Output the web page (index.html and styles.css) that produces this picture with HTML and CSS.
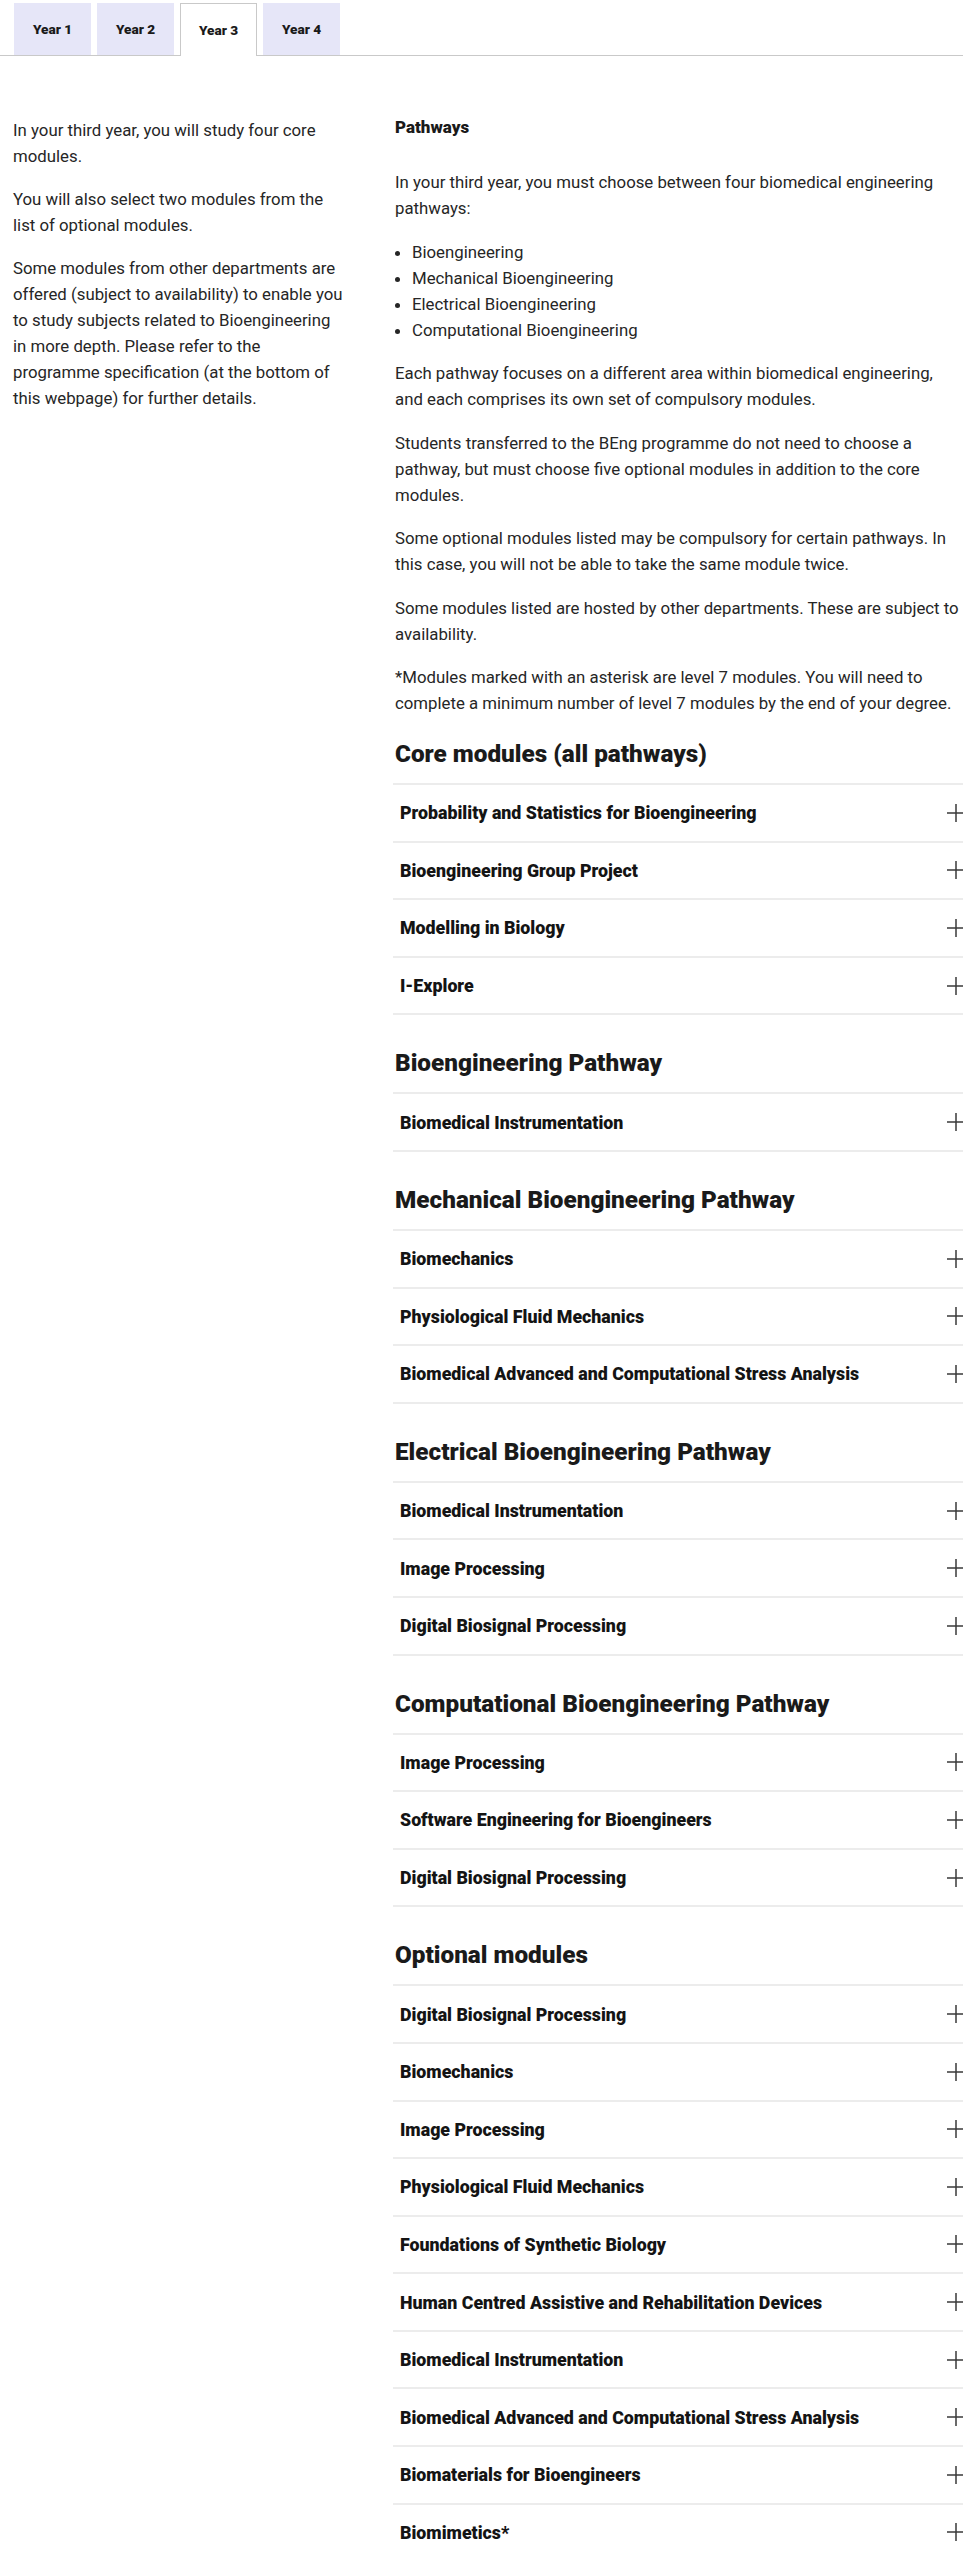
FILE: index.html
```html
<!DOCTYPE html>
<html lang="en">
<head>
<meta charset="utf-8">
<title>Year 3 modules</title>
<link rel="stylesheet" href="styles.css">
</head>
<body>
<div class="page">
  <nav class="tabs">
    <a class="tab">Year 1</a>
    <a class="tab">Year 2</a>
    <a class="tab tab-active">Year 3</a>
    <a class="tab">Year 4</a>
  </nav>

  <div class="content">
    <aside class="side">
      <p>In your third year, you will study four core modules.</p>
      <p>You will also select two modules from the list of optional modules.</p>
      <p>Some modules from other departments are offered (subject to availability) to enable you to study subjects related to Bioengineering in more depth. Please refer to the programme specification (at the bottom of this webpage) for further details.</p>
    </aside>

    <main class="main">
      <h4 class="intro-title">Pathways</h4>
      <p>In your third year, you must choose between four biomedical engineering pathways:</p>
      <ul class="bullets">
        <li>Bioengineering</li>
        <li>Mechanical Bioengineering</li>
        <li>Electrical Bioengineering</li>
        <li>Computational Bioengineering</li>
      </ul>
      <p>Each pathway focuses on a different area within biomedical engineering, and each comprises its own set of compulsory modules.</p>
      <p>Students transferred to the BEng programme do not need to choose a pathway, but must choose five optional modules in addition to the core modules.</p>
      <p>Some optional modules listed may be compulsory for certain pathways. In this case, you will not be able to take the same module twice.</p>
      <p>Some modules listed are hosted by other departments. These are subject to availability.</p>
      <p class="last">*Modules marked with an asterisk are level 7 modules. You will need to complete a minimum number of level 7 modules by the end of your degree.</p>

      <section class="group group-first">
        <h3 class="group-title">Core modules (all pathways)</h3>
        <ul class="modules">
          <li class="module"><span>Probability and Statistics for Bioengineering</span><svg class="plus" viewBox="0 0 18 18"><path d="M9 0v18M0 9h18"/></svg></li>
          <li class="module"><span>Bioengineering Group Project</span><svg class="plus" viewBox="0 0 18 18"><path d="M9 0v18M0 9h18"/></svg></li>
          <li class="module"><span>Modelling in Biology</span><svg class="plus" viewBox="0 0 18 18"><path d="M9 0v18M0 9h18"/></svg></li>
          <li class="module"><span>I-Explore</span><svg class="plus" viewBox="0 0 18 18"><path d="M9 0v18M0 9h18"/></svg></li>
        </ul>
      </section>

      <section class="group">
        <h3 class="group-title">Bioengineering Pathway</h3>
        <ul class="modules">
          <li class="module"><span>Biomedical Instrumentation</span><svg class="plus" viewBox="0 0 18 18"><path d="M9 0v18M0 9h18"/></svg></li>
        </ul>
      </section>

      <section class="group">
        <h3 class="group-title">Mechanical Bioengineering Pathway</h3>
        <ul class="modules">
          <li class="module"><span>Biomechanics</span><svg class="plus" viewBox="0 0 18 18"><path d="M9 0v18M0 9h18"/></svg></li>
          <li class="module"><span>Physiological Fluid Mechanics</span><svg class="plus" viewBox="0 0 18 18"><path d="M9 0v18M0 9h18"/></svg></li>
          <li class="module"><span>Biomedical Advanced and Computational Stress Analysis</span><svg class="plus" viewBox="0 0 18 18"><path d="M9 0v18M0 9h18"/></svg></li>
        </ul>
      </section>

      <section class="group">
        <h3 class="group-title">Electrical Bioengineering Pathway</h3>
        <ul class="modules">
          <li class="module"><span>Biomedical Instrumentation</span><svg class="plus" viewBox="0 0 18 18"><path d="M9 0v18M0 9h18"/></svg></li>
          <li class="module"><span>Image Processing</span><svg class="plus" viewBox="0 0 18 18"><path d="M9 0v18M0 9h18"/></svg></li>
          <li class="module"><span>Digital Biosignal Processing</span><svg class="plus" viewBox="0 0 18 18"><path d="M9 0v18M0 9h18"/></svg></li>
        </ul>
      </section>

      <section class="group">
        <h3 class="group-title">Computational Bioengineering Pathway</h3>
        <ul class="modules">
          <li class="module"><span>Image Processing</span><svg class="plus" viewBox="0 0 18 18"><path d="M9 0v18M0 9h18"/></svg></li>
          <li class="module"><span>Software Engineering for Bioengineers</span><svg class="plus" viewBox="0 0 18 18"><path d="M9 0v18M0 9h18"/></svg></li>
          <li class="module"><span>Digital Biosignal Processing</span><svg class="plus" viewBox="0 0 18 18"><path d="M9 0v18M0 9h18"/></svg></li>
        </ul>
      </section>

      <section class="group">
        <h3 class="group-title">Optional modules</h3>
        <ul class="modules">
          <li class="module"><span>Digital Biosignal Processing</span><svg class="plus" viewBox="0 0 18 18"><path d="M9 0v18M0 9h18"/></svg></li>
          <li class="module"><span>Biomechanics</span><svg class="plus" viewBox="0 0 18 18"><path d="M9 0v18M0 9h18"/></svg></li>
          <li class="module"><span>Image Processing</span><svg class="plus" viewBox="0 0 18 18"><path d="M9 0v18M0 9h18"/></svg></li>
          <li class="module"><span>Physiological Fluid Mechanics</span><svg class="plus" viewBox="0 0 18 18"><path d="M9 0v18M0 9h18"/></svg></li>
          <li class="module"><span>Foundations of Synthetic Biology</span><svg class="plus" viewBox="0 0 18 18"><path d="M9 0v18M0 9h18"/></svg></li>
          <li class="module"><span>Human Centred Assistive and Rehabilitation Devices</span><svg class="plus" viewBox="0 0 18 18"><path d="M9 0v18M0 9h18"/></svg></li>
          <li class="module"><span>Biomedical Instrumentation</span><svg class="plus" viewBox="0 0 18 18"><path d="M9 0v18M0 9h18"/></svg></li>
          <li class="module"><span>Biomedical Advanced and Computational Stress Analysis</span><svg class="plus" viewBox="0 0 18 18"><path d="M9 0v18M0 9h18"/></svg></li>
          <li class="module"><span>Biomaterials for Bioengineers</span><svg class="plus" viewBox="0 0 18 18"><path d="M9 0v18M0 9h18"/></svg></li>
          <li class="module"><span>Biomimetics*</span><svg class="plus" viewBox="0 0 18 18"><path d="M9 0v18M0 9h18"/></svg></li>
        </ul>
      </section>
    </main>
  </div>
</div>
</body>
</html>
```

FILE: styles.css
```css
html, body {
  margin: 0;
  padding: 0;
  background: #ffffff;
}

body {
  font-family: Roboto, "Liberation Sans", Arial, sans-serif;
  color: #262626;
  overflow-x: hidden;
}

.page {
  width: 963px;
  overflow: hidden;
}

/* Tabs */
.tabs {
  display: flex;
  gap: 6px;
  padding: 3px 0 0 14px;
  border-bottom: 1px solid #c9c9c9;
  height: 52px;
}

.tab {
  width: 77px;
  height: 52px;
  display: flex;
  align-items: center;
  justify-content: center;
  background: #e6e6f8;
  font-size: 13.6px;
  font-weight: 900;
  color: #1a1a1a;
  box-sizing: border-box;
}

.tab-active {
  background: #ffffff;
  border: 1px solid #c9c9c9;
  border-bottom: none;
  height: 53px;
  margin-bottom: -1px;
}

/* Content */
.content {
  display: grid;
  grid-template-columns: 332px 568px;
  column-gap: 50px;
  padding: 61px 0 0 13px;
}

.side p,
.main p {
  margin: 0 0 17.5px;
  font-size: 16.8px;
  line-height: 26px;
}

.side p {
  margin-bottom: 17px;
}

.main p.last {
  margin-bottom: 0;
}

.intro-title {
  margin: 0 0 32px;
  font-size: 17px;
  line-height: 20px;
  font-weight: 900;
  color: #1a1a1a;
}

.bullets {
  margin: 0 0 17.5px;
  padding-left: 17px;
  font-size: 16.8px;
  line-height: 26px;
}

/* Module groups */
.group-title {
  margin: 33px 0 14px;
  font-size: 24.3px;
  line-height: 30px;
  font-weight: 900;
  color: #1a1a1a;
}

.group-first .group-title {
  margin-top: 23px;
}

.modules {
  list-style: none;
  margin: 0 -4px 0 -2px;
  padding: 0;
  border-top: 2px solid #ececec;
}

.module {
  display: flex;
  align-items: center;
  justify-content: space-between;
  height: 55.6px;
  padding: 0 2px 0 7px;
  border-bottom: 2px solid #ececec;
  font-size: 17.8px;
  font-weight: 900;
  color: #141414;
}

.plus {
  width: 18px;
  height: 18px;
  flex: none;
}

.plus path {
  fill: none;
  stroke: #3a3a3a;
  stroke-width: 1.5;
}
```
